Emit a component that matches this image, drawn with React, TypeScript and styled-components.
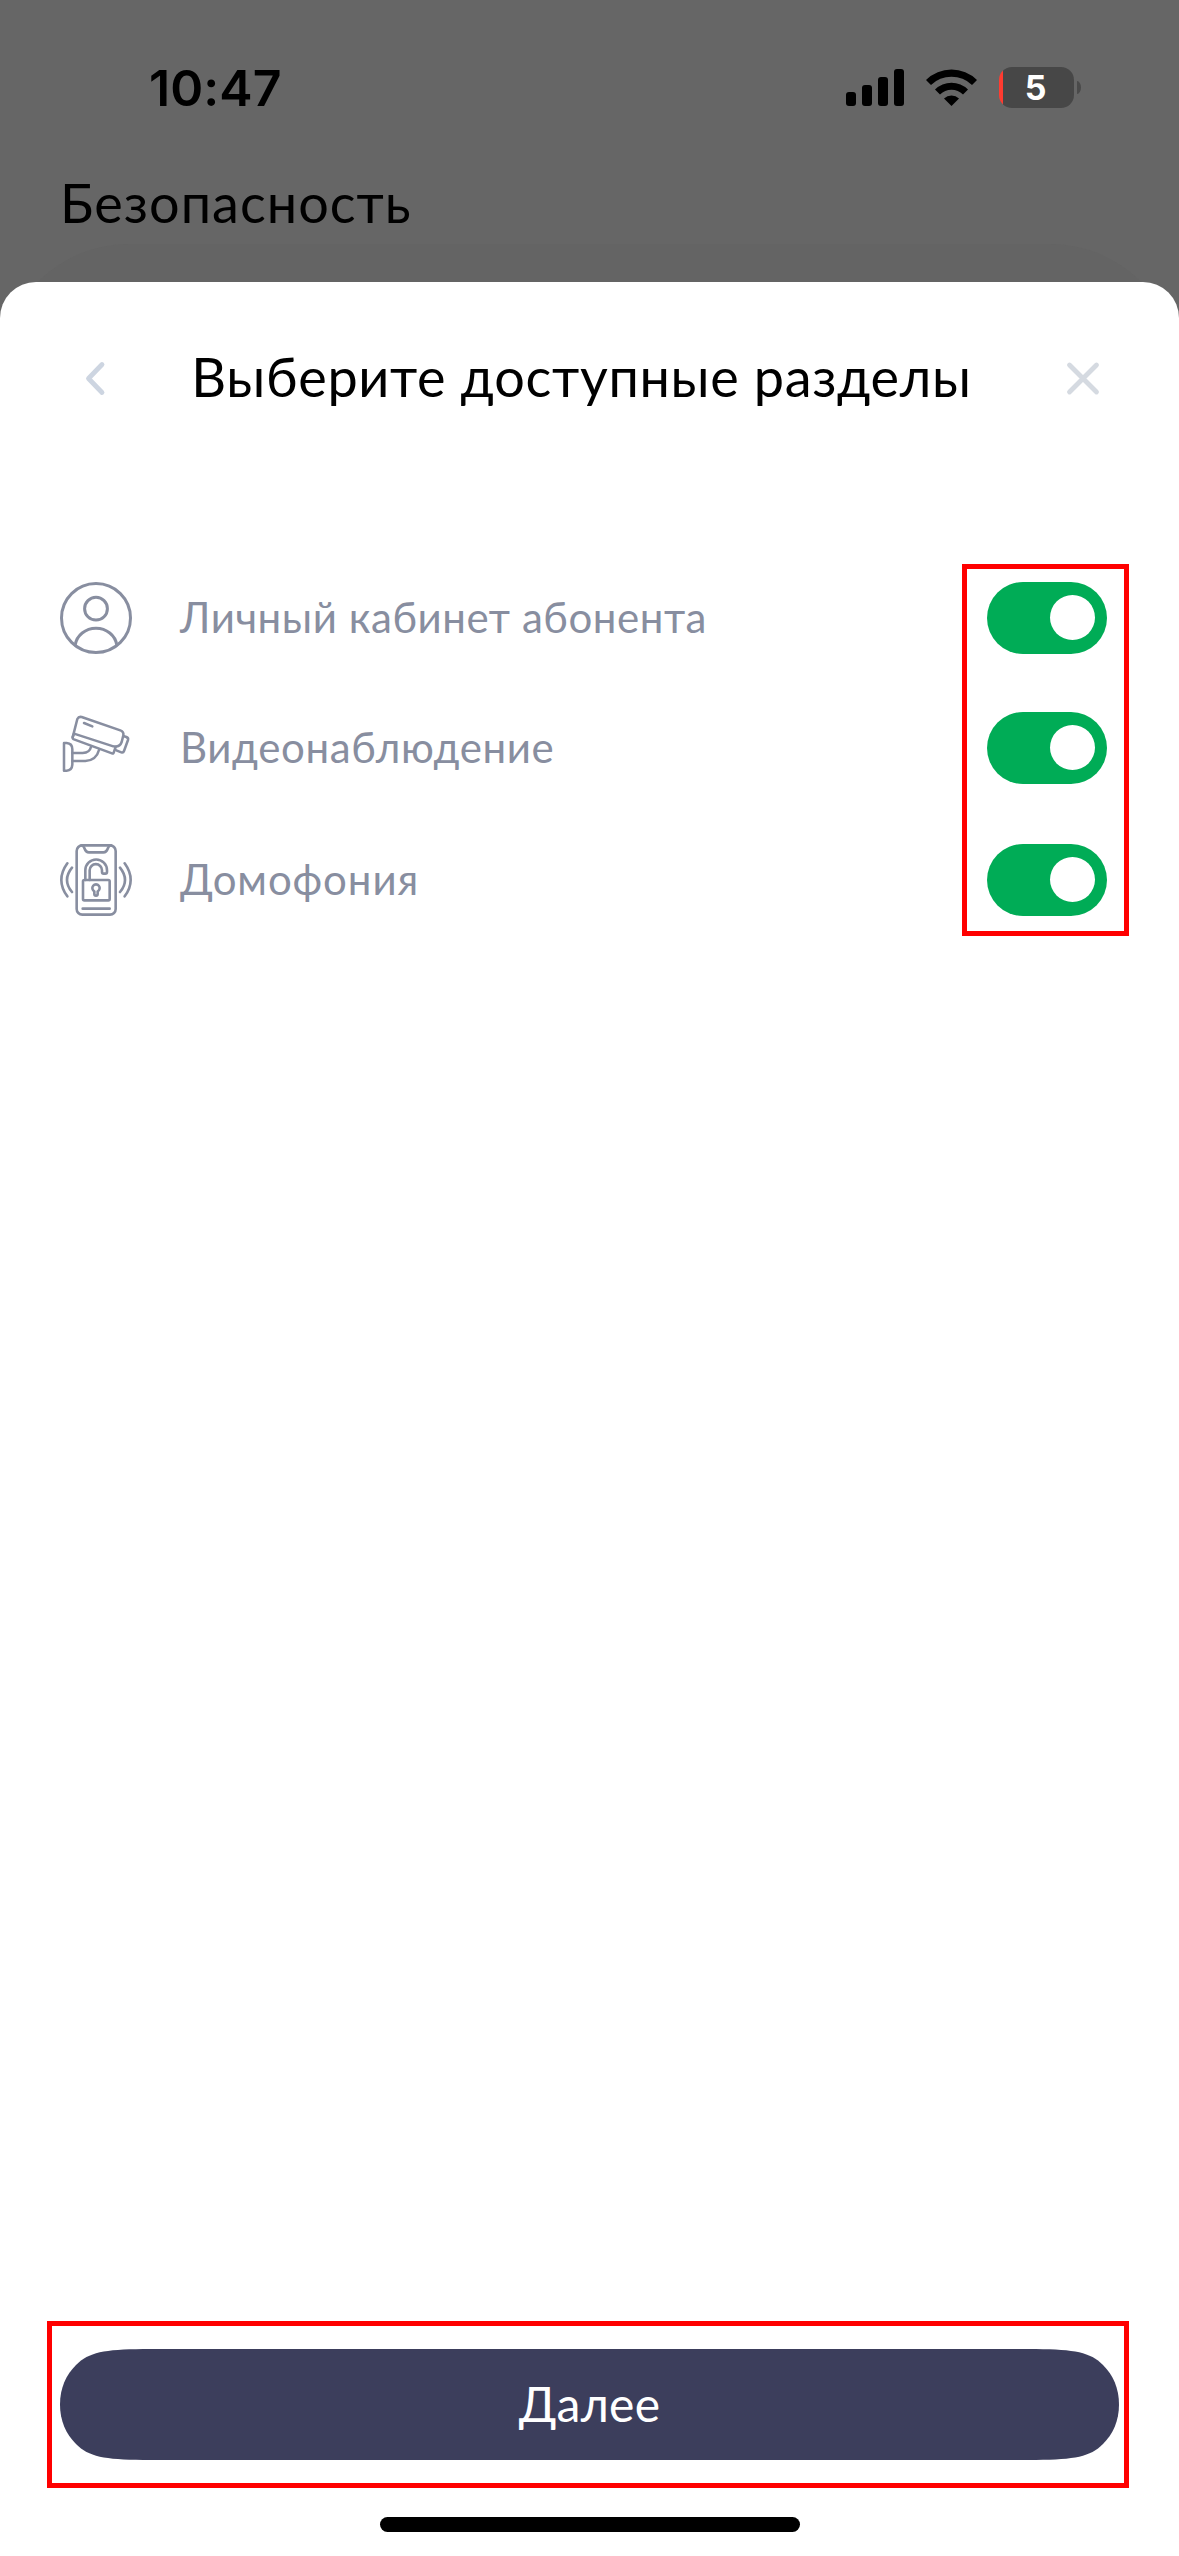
import React, { ReactNode } from "react";
import styled, { createGlobalStyle } from "styled-components";

const GlobalStyle = createGlobalStyle`
  * { box-sizing: border-box; }
  body { margin: 0; background: #666; }
`;

const Screen = styled.main`
  position: relative;
  display: flex;
  flex-direction: column;
  width: 1179px;
  height: 2556px;
  overflow: hidden;
  background: #666;
  font-family: Lato, "Noto Sans", sans-serif;
`;

const Backdrop = styled.div`
  position: relative;
  flex: none;
  height: 282px;
`;

const StatusRow = styled.div`
  display: flex;
  align-items: center;
  justify-content: space-between;
  height: 175px;
  padding: 0 98px 0 149px;
`;

const Clock = styled.span`
  font: 600 50px/60px Inter, sans-serif;
  letter-spacing: 0.1px;
`;

const Indicators = styled.div`
  display: flex;
  align-items: center;
`;

const Signal = styled.svg`
  width: 58px;
  height: 37px;
  margin-right: 22px;
`;

const Wifi = styled.svg`
  width: 51px;
  height: 37px;
  margin-right: 22px;
`;

const Battery = styled.div`
  display: flex;
  align-items: center;
  justify-content: center;
  width: 75px;
  height: 41px;
  padding-right: 2px;
  border-radius: 13px;
  background: linear-gradient(90deg, #ff3b30 4px, #474747 4px);
  color: #fff;
  font: 700 34px/40px Inter, sans-serif;
`;

const BatteryCap = styled.span`
  width: 4px;
  height: 13px;
  margin-left: 3px;
  border-radius: 0 4px 4px 0 / 0 6.5px 6.5px 0;
  background: #4a4a4a;
`;

const PageTitle = styled.h1`
  margin: -2px 0 0;
  padding-left: 60px;
  font-size: 54px;
  line-height: 60px;
  font-weight: 400;
  letter-spacing: 1px;
`;

const StackedCard = styled.div`
  position: absolute;
  top: 244px;
  left: 0;
  width: 100%;
  height: 300px;
  border-radius: 129px;
  background: #646464;
`;

const Sheet = styled.section`
  position: relative;
  flex: 1;
  display: flex;
  flex-direction: column;
  padding-top: 59px;
  border-radius: 36px 36px 0 0;
  background: #fff;
`;

const Header = styled.header`
  display: flex;
  align-items: center;
  height: 73px;
  padding: 0 60px;
`;

const IconButton = styled.button<{ $color: string }>`
  width: 72px;
  height: 72px;
  padding: 0;
  border: 0;
  background: none;
  color: ${(p) => p.$color};

  svg {
    display: block;
    width: 72px;
    height: 72px;
    fill: none;
    stroke: currentColor;
    stroke-width: 4.8;
    stroke-linecap: round;
    stroke-linejoin: round;
  }
`;

const SheetTitle = styled.h2`
  flex: 1;
  margin: 0;
  padding: 0 16px 2px 0;
  font-size: 54px;
  line-height: 66px;
  font-weight: 400;
  letter-spacing: 0.67px;
  text-align: center;
  white-space: nowrap;
`;

const List = styled.div`
  position: relative;
  display: grid;
  grid-template-rows: 130px 132px 72px;
  align-items: start;
  margin-top: 168px;
  padding: 0 72px 0 60px;
`;

const Row = styled.div`
  display: flex;
  align-items: center;
  gap: 48px;
  height: 72px;
`;

const RowIcon = styled.svg<{ $stroke: number }>`
  flex: none;
  width: 72px;
  height: 72px;
  fill: none;
  stroke: #888ea0;
  stroke-width: ${(p) => p.$stroke};
  stroke-linecap: round;
  stroke-linejoin: round;
`;

const RowLabel = styled.span<{ $tracking: number }>`
  flex: 1;
  padding-bottom: 3px;
  color: #888ea0;
  font-size: 42px;
  line-height: 50px;
  letter-spacing: ${(p) => p.$tracking}px;
`;

const Toggle = styled.button`
  display: flex;
  justify-content: flex-end;
  width: 120px;
  height: 72px;
  padding: 13px 12px 14px;
  border: 0;
  border-radius: 36px;
  background: #00ac56;
`;

const Knob = styled.span`
  width: 45px;
  height: 45px;
  border-radius: 50%;
  background: #fff;
`;

const TogglesOutline = styled.div`
  position: absolute;
  top: -18px;
  right: 50px;
  width: 167px;
  height: 372px;
  border: 5px solid #f00;
`;

const Footer = styled.footer`
  display: flex;
  flex-direction: column;
  align-items: center;
  gap: 29px;
  margin-top: auto;
  padding-bottom: 24px;
`;

const ButtonOutline = styled.div`
  align-self: flex-start;
  width: 1082px;
  height: 167px;
  margin-left: 47px;
  padding: 23px 0 0 8px;
  border: 5px solid #f00;
`;

const NextButton = styled.button`
  display: block;
  width: 1059px;
  height: 111px;
  padding: 0 0 2px;
  border: 0;
  background: #3c3e5c;
  clip-path: path(
    "M0 55.5C0 39 6 26 16 16C29 3 44 .6 83 0H976C1015 .6 1030 3 1043 16C1053 26 1059 39 1059 55.5C1059 72 1053 85 1043 95C1030 108 1015 110.4 976 111H83C44 110.4 29 108 16 95C6 85 0 72 0 55.5Z"
  );
  color: #fff;
  font: 400 48px/58px Lato, "Noto Sans", sans-serif;
  letter-spacing: 0.3px;
`;

const HomeIndicator = styled.div`
  width: 420px;
  height: 15px;
  border-radius: 8px;
  background: #000;
`;

const UserIcon = () => (
  <RowIcon viewBox="0 0 72 72" $stroke={3}>
    <circle cx="36" cy="36" r="34.5" />
    <circle cx="36" cy="26.7" r="11.4" />
    <path d="M15.2 63A21 19.5 0 0 1 56.8 63" />
  </RowIcon>
);

const CameraIcon = () => (
  <RowIcon viewBox="30 36 216 216" $stroke={7.6}>
    <path d="M68 112L82 57Q86 49 95 51L211 91Q222 95 220 106L215 126Q209 143 190 139L72 101" />
    <path d="M72 101L68 111Q67 116 72 118L186 160Q190 162 191 158L197 141" />
    <path d="M220 108L229 111Q236 114 234 120L222 153Q220 159 214 157L199 151" />
    <path d="M102 69L127 79" />
    <path d="M42 129H50Q67 130 67 148V194Q66 211 50 212H42Z" />
    <path d="M67 159H98Q119 158 123 141M67 183H106Q139 181 147 150" />
  </RowIcon>
);

const IntercomIcon = () => (
  <RowIcon viewBox="30 42 216 216" $stroke={7.8}>
    <rect x="80" y="46" width="117" height="208" rx="17" />
    <path d="M94 46Q100 47 103 54C106 63 109 67 117 67H160C168 67 171 63 174 54Q177 47 183 46" />
    <path d="M98 236H179" />
    <rect x="99" y="150" width="80" height="61" rx="4" />
    <path d="M106 150V121A32.5 32.5 0 0 1 171 121V126Q171 131 166 131H161Q156 131 156 126V121A18.5 18.5 0 0 0 119 121V150" />
    <path d="M133 184V192A5 5 0 0 0 143 192V184A11 11 0 1 0 133 184Z" />
    <path d="M52 100Q16 150 52 199M66 113Q36 150 66 186" />
    <path d="M224 100Q260 150 224 199M210 113Q240 150 210 186" />
  </RowIcon>
);

const sections: { label: string; tracking: number; icon: ReactNode }[] = [
  { label: "Личный кабинет абонента", tracking: 0.55, icon: <UserIcon /> },
  { label: "Видеонаблюдение", tracking: 0.6, icon: <CameraIcon /> },
  { label: "Домофония", tracking: 0.9, icon: <IntercomIcon /> },
];

export default function App() {
  return (
    <Screen>
      <GlobalStyle />
      <StackedCard />
      <Backdrop>
        <StatusRow>
          <Clock>10:47</Clock>
          <Indicators>
            <Signal viewBox="0 0 58 37">
              <rect x="0" y="23" width="10" height="14" rx="3" />
              <rect x="16" y="16" width="10" height="21" rx="3" />
              <rect x="32" y="8" width="10" height="29" rx="3" />
              <rect x="48" y="0" width="10" height="37" rx="3" />
            </Signal>
            <Wifi viewBox="0 0 51 37">
              <path d="M0 11A36.5 36.5 0 0 1 51 11L46 16A29.5 29.5 0 0 0 5 16Z" />
              <path d="M9 20.5A23.5 23.5 0 0 1 42 20.5L37 25.5A16.5 16.5 0 0 0 14 25.5Z" />
              <path d="M18 29.5A11 11 0 0 1 33 29.5L25.5 37Z" />
            </Wifi>
            <Battery>5</Battery>
            <BatteryCap />
          </Indicators>
        </StatusRow>
        <PageTitle>Безопасность</PageTitle>
      </Backdrop>
      <Sheet>
        <Header>
          <IconButton $color="#cdd5e1" aria-label="Назад">
            <svg viewBox="0 0 72 72">
              <path d="M42 22.5L28.5 36.5L42 50.5" />
            </svg>
          </IconButton>
          <SheetTitle>Выберите доступные разделы</SheetTitle>
          <IconButton $color="#d5dae1" aria-label="Закрыть">
            <svg viewBox="0 0 72 72">
              <path d="M22.5 23L49.5 50M49.5 23L22.5 50" />
            </svg>
          </IconButton>
        </Header>
        <List>
          {sections.map((s) => (
            <Row key={s.label}>
              {s.icon}
              <RowLabel $tracking={s.tracking}>{s.label}</RowLabel>
              <Toggle role="switch" aria-checked="true">
                <Knob />
              </Toggle>
            </Row>
          ))}
          <TogglesOutline />
        </List>
        <Footer>
          <ButtonOutline>
            <NextButton>Далее</NextButton>
          </ButtonOutline>
          <HomeIndicator />
        </Footer>
      </Sheet>
    </Screen>
  );
}
